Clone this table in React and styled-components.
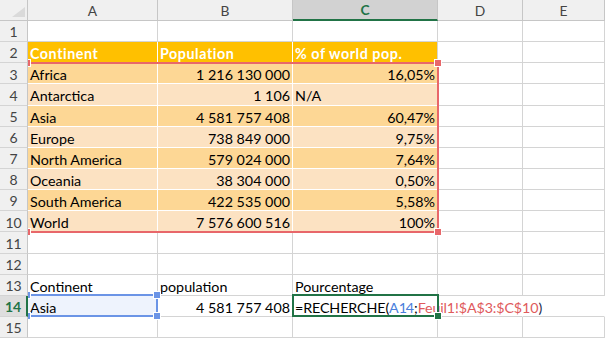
import React from 'react';
import styled, { createGlobalStyle } from 'styled-components';

const GRID = '#d4d4d4';
const HEAD_LINE = '#c6c6c6';
const GREEN = '#217346';
const RED = '#e8676a';
const BLUE = '#6b94e6';

const GlobalStyle = createGlobalStyle`
  html, body { margin: 0; padding: 0; background: #fff; }
  body { overflow: hidden; }
`;

const Sheet = styled.div`
  position: relative;
  display: grid;
  grid-template-columns: 28px 130px 135px 145px 85px 1fr;
  grid-template-rows: 21px repeat(15, 21.15px);
  width: 605px;
  height: 338px;
  overflow: hidden;
  font-family: Lato, 'Liberation Sans', sans-serif;
  font-size: 14.3px;
  color: #000;
  background: #fff;
`;

const Corner = styled.div`
  position: relative;
  z-index: 3;
  background: #f0f0f0;
  border-right: 1px solid ${HEAD_LINE};
  border-bottom: 1px solid ${HEAD_LINE};
  &::after {
    content: '';
    position: absolute;
    right: 2px;
    bottom: 3px;
    width: 0;
    height: 0;
    border-left: 13px solid transparent;
    border-bottom: 10px solid #dadada;
  }
`;

const ColHead = styled.div`
  position: relative;
  z-index: 3;
  display: flex;
  align-items: center;
  justify-content: center;
  font-size: 13.8px;
  background: ${(p) => (p.$active ? '#d2d2d2' : '#f0f0f0')};
  color: ${(p) => (p.$active ? GREEN : '#444')};
  font-weight: ${(p) => (p.$active ? 700 : 400)};
  border-right: 1px solid ${HEAD_LINE};
  border-bottom: ${(p) => (p.$active ? `2px solid ${GREEN}` : `1px solid ${HEAD_LINE}`)};
`;

const RowHead = styled.div`
  position: relative;
  z-index: 3;
  display: flex;
  align-items: flex-end;
  justify-content: center;
  line-height: 1.2;
  font-size: 14px;
  background: ${(p) => (p.$active ? '#dedede' : '#f0f0f0')};
  color: ${(p) => (p.$active ? GREEN : '#444')};
  font-weight: ${(p) => (p.$active ? 700 : 400)};
  border-right: ${(p) => (p.$active ? `2px solid ${GREEN}` : `1px solid ${HEAD_LINE}`)};
  border-bottom: 1px solid ${GRID};
`;

const Cell = styled.div`
  display: flex;
  align-items: flex-end;
  justify-content: ${(p) => (p.$right ? 'flex-end' : 'flex-start')};
  min-width: 0;
  padding: 0 2px;
  line-height: 1.2;
  white-space: nowrap;
  background: ${(p) => p.$fill || 'transparent'};
  color: ${(p) => p.$color || '#000'};
  font-weight: ${(p) => (p.$bold ? 700 : 400)};
  letter-spacing: ${(p) => (p.$bold ? '0.55px' : 'normal')};
  border-right: 1px solid ${(p) => (p.$noRight ? 'transparent' : p.$vline || GRID)};
  border-bottom: 1px solid ${(p) => p.$hline || GRID};
`;

const EditCell = styled(Cell)`
  position: relative;
  z-index: 1;
  overflow: visible;
  letter-spacing: -0.12px;
`;

const Range = styled.div`
  position: absolute;
  z-index: 2;
  pointer-events: none;
  grid-column: ${(p) => p.$col};
  grid-row: ${(p) => p.$row};
  top: ${(p) => p.$top}px;
  right: ${(p) => p.$rightOff}px;
  bottom: ${(p) => p.$bottom}px;
  left: ${(p) => p.$left}px;
  border: 2px solid ${(p) => p.$color};
  border-left: ${(p) => (p.$noLeft ? 'none' : `2px solid ${p.$color}`)};
`;

const Handle = styled.span`
  position: absolute;
  width: 6px;
  height: 6px;
  background: ${(p) => p.$color};
  border: 1px solid #fff;
  ${(p) => (p.$at.includes('t') ? 'top: -5px;' : 'bottom: -5px;')}
  ${(p) => (p.$at.includes('l') ? 'left: -4px;' : 'right: -5px;')}
`;

const Part = styled.span`
  color: ${(p) => p.$color || '#000'};
`;

const Caret = styled.span`
  display: inline-block;
  width: 1px;
  height: 20px;
  margin: 0 -0.5px;
  background: #000;
  vertical-align: -5px;
`;

const COLS = ['A', 'B', 'C', 'D', 'E'];

const DATA = [
  ['Africa', '1 216 130 000', '16,05%'],
  ['Antarctica', '1 106', 'N/A'],
  ['Asia', '4 581 757 408', '60,47%'],
  ['Europe', '738 849 000', '9,75%'],
  ['North America', '579 024 000', '7,64%'],
  ['Oceania', '38 304 000', '0,50%'],
  ['South America', '422 535 000', '5,58%'],
  ['World', '7 576 600 516', '100%'],
];

const isNumeric = (v) => /^[\d\s,%]+$/.test(v);

const Blank = ({ n }) =>
  Array.from({ length: n }, (_, i) => <Cell key={i} />);

const Formula = () => (
  <>
    <Part>=RECHERCHE(</Part>
    <Part $color="#4a80dc">A1</Part>
    <Caret />
    <Part $color="#4a80dc">4</Part>
    <Part>;</Part>
    <Part $color="#e05a5c">Feuil1!$A$3:$C$10</Part>
    <Part $color="#1d2a4a">)</Part>
  </>
);

export default function App() {
  return (
    <Sheet>
      <GlobalStyle />
      <Corner />
      {COLS.map((c) => (
        <ColHead key={c} $active={c === 'C'}>
          {c}
        </ColHead>
      ))}

      {/* row 1 */}
      <RowHead>1</RowHead>
      <Blank n={5} />

      {/* row 2: table header */}
      <RowHead>2</RowHead>
      <Cell $fill="#ffc000" $bold $color="#fff" $vline="#fff" $hline="#fff">Continent</Cell>
      <Cell $fill="#ffc000" $bold $color="#fff" $vline="#fff" $hline="#fff">Population</Cell>
      <Cell $fill="#ffc000" $bold $color="#fff" $hline="#fff">% of world pop.</Cell>
      <Blank n={2} />

      {DATA.map((row, i) => {
        const fill = i % 2 === 0 ? '#fdd795' : '#fce2c2';
        return (
          <React.Fragment key={row[0]}>
            <RowHead>{i + 3}</RowHead>
            <Cell $fill={fill} $vline="#fff" $hline="#fff">{row[0]}</Cell>
            <Cell $fill={fill} $vline="#fff" $hline="#fff" $right>{row[1]}</Cell>
            <Cell $fill={fill} $hline="#fff" $right={isNumeric(row[2])}>{row[2]}</Cell>
            <Blank n={2} />
          </React.Fragment>
        );
      })}

      <RowHead>11</RowHead>
      <Blank n={5} />
      <RowHead>12</RowHead>
      <Blank n={5} />

      <RowHead>13</RowHead>
      <Cell>Continent</Cell>
      <Cell>population</Cell>
      <Cell>Pourcentage</Cell>
      <Blank n={2} />

      <RowHead $active>14</RowHead>
      <Cell $fill="#eef3fd">Asia</Cell>
      <Cell $right>4 581 757 408</Cell>
      <EditCell>
        <Formula />
      </EditCell>
      <Cell $noRight />
      <Cell $noRight />

      <RowHead>15</RowHead>
      <Blank n={5} />

      <Range $col="2 / 5" $row="4 / 12" $color={RED} $top={-1} $rightOff={-1} $bottom={-1} $left={-1} $noLeft>
        <Handle $color={RED} $at="tl" />
        <Handle $color={RED} $at="tr" />
        <Handle $color={RED} $at="bl" />
        <Handle $color={RED} $at="br" />
      </Range>

      <Range $col="2 / 3" $row="15 / 16" $color={BLUE} $top={-2} $rightOff={0} $bottom={0} $left={-1} $noLeft>
        <Handle $color={BLUE} $at="tl" />
        <Handle $color={BLUE} $at="tr" />
        <Handle $color={BLUE} $at="bl" />
        <Handle $color={BLUE} $at="br" />
      </Range>

      <Range $col="4 / 5" $row="15 / 16" $color={GREEN} $top={-2} $rightOff={-1} $bottom={0} $left={-1}>
        <Handle $color={GREEN} $at="br" />
      </Range>
    </Sheet>
  );
}
